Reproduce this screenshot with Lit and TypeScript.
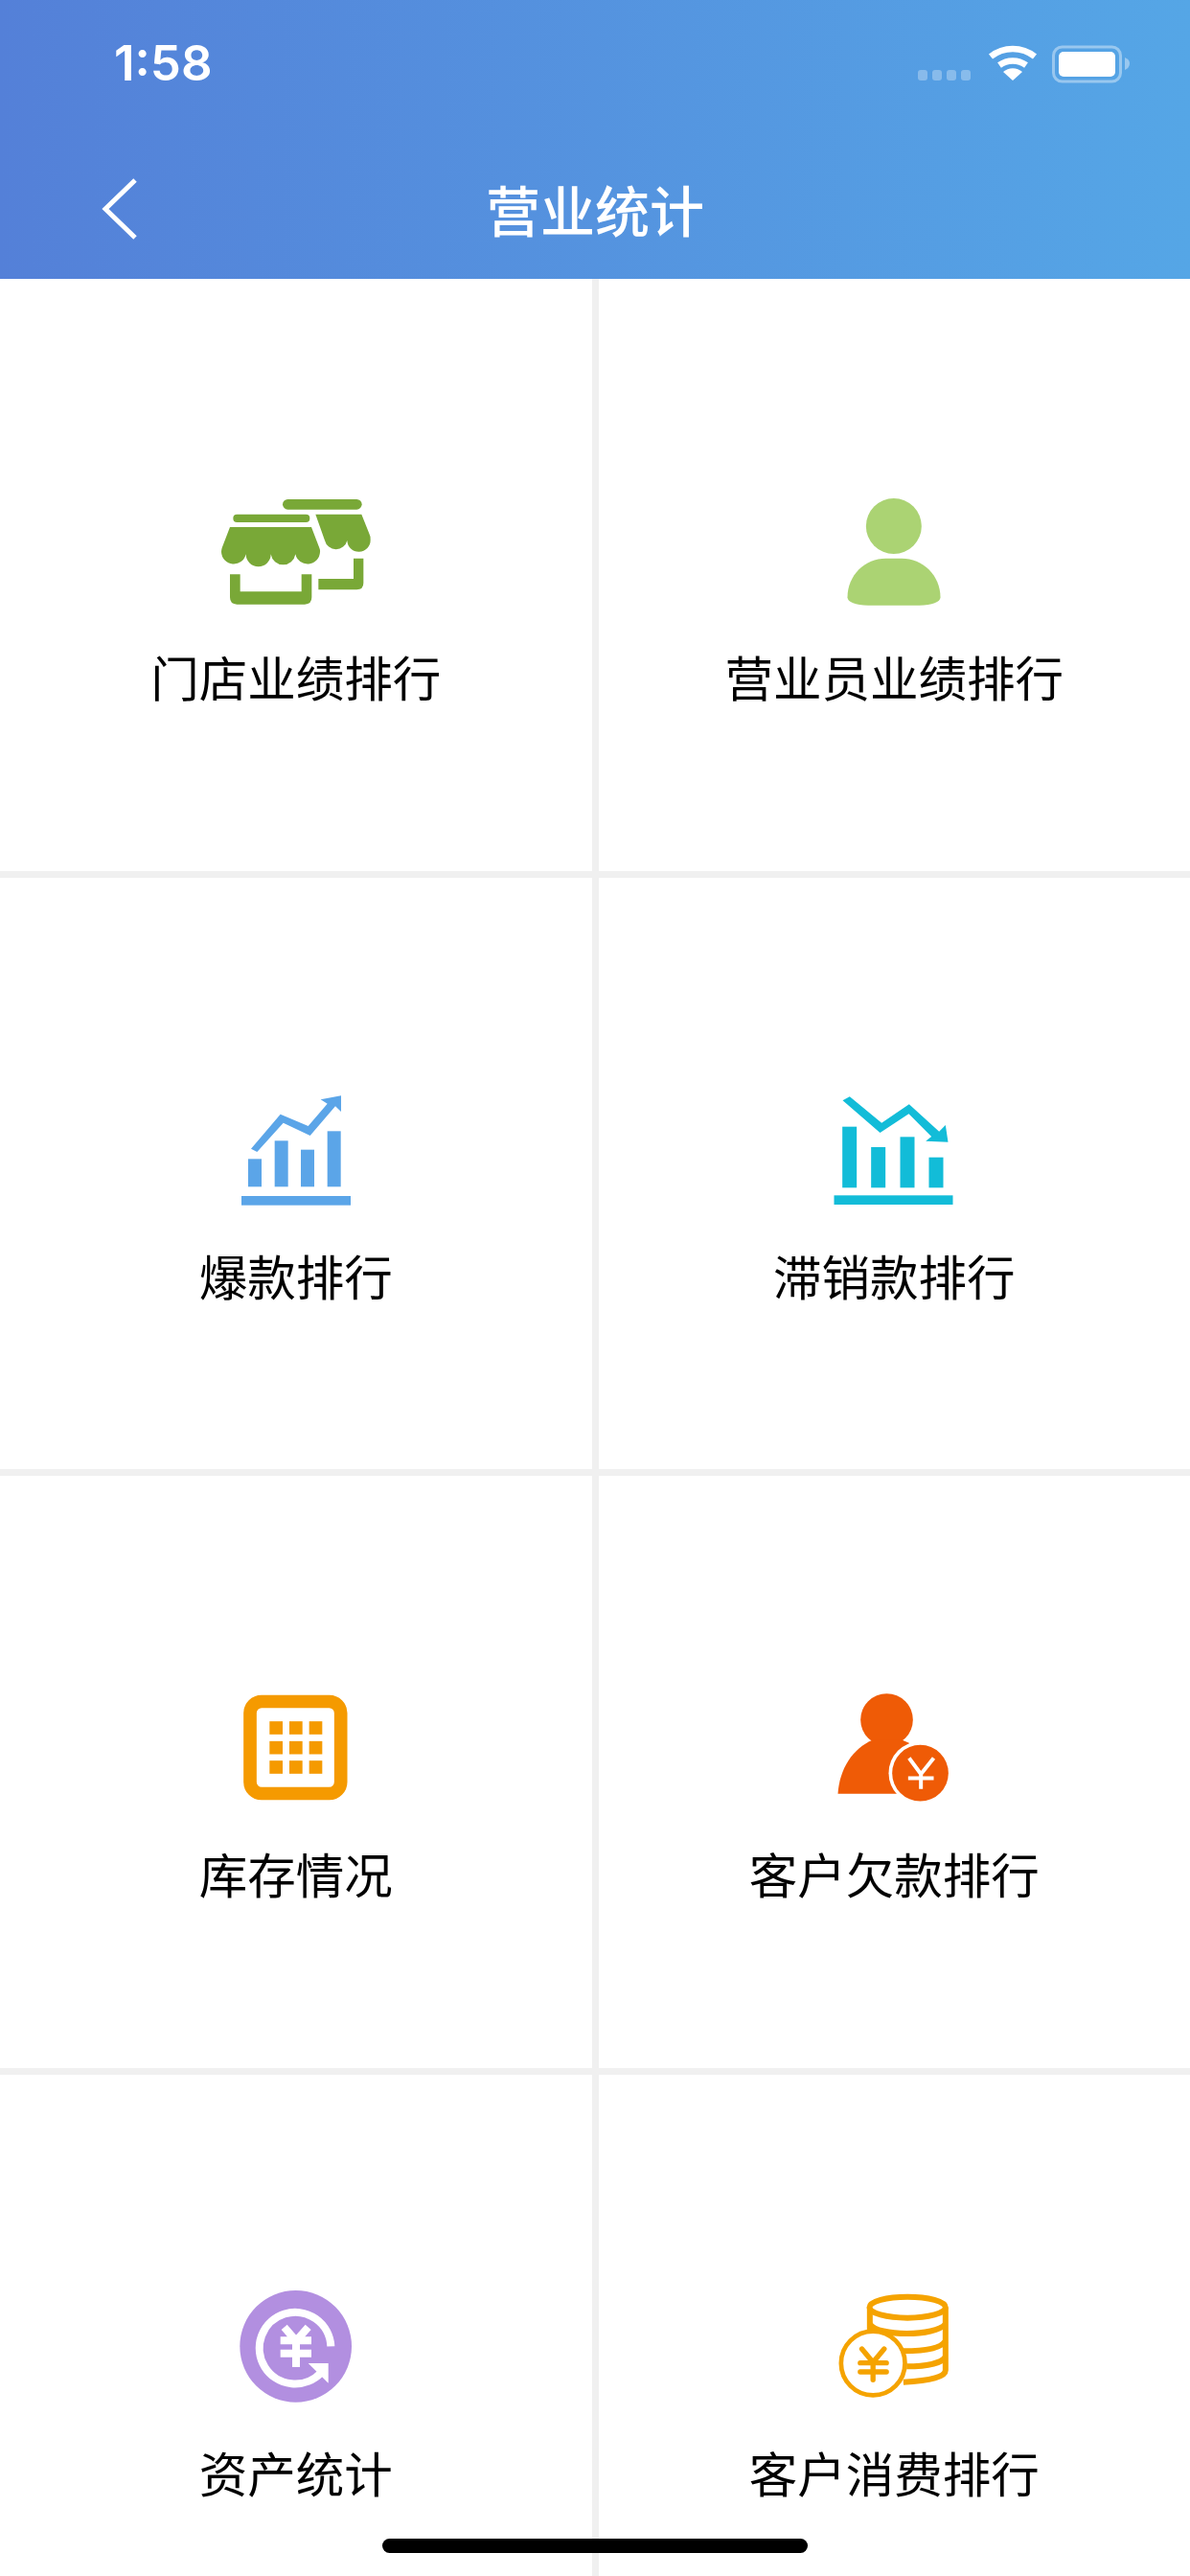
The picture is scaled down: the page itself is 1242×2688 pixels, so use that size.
import { LitElement, html, svg, css } from 'lit';
import { customElement } from 'lit/decorators.js';

// icon paths are in 3x units, the viewBox offsets line them up inside a 220x170 box
const yen = (x: number, y: number) => svg`
  <path d="M${x - 37} ${y - 50}L${x} ${y}L${x + 40} ${y - 50}M${x - 40} ${y + 13}H${x + 40}M${x} ${y}V${y + 47}" fill="none" stroke="#fff" stroke-width="12"/>`;

const icons = {
  store: svg`
    <g fill="#79a837">
      <rect x="130" y="140" width="240" height="25" rx="12"/>
      <path d="M120 180H375L400 245Q403 252 402 258A39 39 0 0 1 325 265A39 39 0 0 1 248 265A39 39 0 0 1 170 265A39 39 0 0 1 93 258Q93 252 95 245Z"/>
      <path d="M120 328H152V382H344V328H376V400Q376 422 354 422H142Q120 422 120 400Z"/>
      <rect x="285" y="93" width="248" height="32" rx="16"/>
      <path d="M388 140H532L556 200Q562 212 560 220A36 36 0 0 1 487 222A36 36 0 0 1 417 222Z"/>
      <path d="M507 278H538V355Q538 376 517 376H397V342H507Z"/>
    </g>`,
  person: svg`
    <g fill="#abd373">
      <circle cx="220" cy="147" r="87"/>
      <path d="M75 370C75 300 130 248 195 248H245C310 248 366 300 366 370C366 385 340 395 300 395H140C100 395 75 385 75 370Z"/>
    </g>`,
  up: svg`
    <g fill="#5ba5e8">
      <rect x="87" y="268" width="42" height="87"/>
      <rect x="170" y="211" width="42" height="144"/>
      <rect x="252" y="239" width="42" height="116"/>
      <rect x="335" y="181" width="42" height="174"/>
      <rect x="66" y="384" width="342" height="29"/>
      <polygon points="96,236 115,246 197,155 281,195 360,103 378,120 378,70 314,82 335,95 275,165 188,128"/>
    </g>`,
  down: svg`
    <g fill="#12bcd8">
      <rect x="89" y="167" width="45" height="191"/>
      <rect x="179" y="231" width="45" height="127"/>
      <rect x="270" y="199" width="45" height="159"/>
      <rect x="360" y="263" width="45" height="95"/>
      <rect x="63" y="382" width="372" height="29"/>
      <polygon points="90,85 112,73 212,155 298,97 392,182 412,162 420,215 350,212 368,198 297,127 207,186"/>
    </g>`,
  stock: svg`
    <rect x="63" y="78" width="284" height="288" rx="36" fill="none" stroke="#f59a00" stroke-width="41"/>
    <g fill="#f59a00">
      ${[140, 202, 263].map((y) =>
        [124, 186, 248].map((x) => svg`<rect x=${x} y=${y} width="41" height="41"/>`)
      )}
    </g>`,
  debt: svg`
    <g fill="#ef5b06">
      <circle cx="198" cy="135" r="82"/>
      <path d="M45 367C50 290 90 225 155 198H245L268 208V367Z"/>
      <circle cx="303" cy="302" r="99" fill="#fff"/>
      <circle cx="303" cy="302" r="88"/>
    </g>
    ${yen(305, 305)}`,
  asset: svg`
    <circle cx="206" cy="235" r="175" fill="#b28fe0"/>
    <path d="M316 235A112 112 0 1 0 285 318" fill="none" stroke="#fff" stroke-width="24"/>
    <polygon points="245,288 308,288 308,350" fill="#fff"/>
    <path d="M170 175L207 218L245 175M158 217H255M158 257H255M207 218V300" fill="none" stroke="#fff" stroke-width="24"/>`,
  coins: svg`
    <g fill="none" stroke="#f5a300" stroke-width="18">
      <ellipse cx="263" cy="113" rx="119" ry="33"/>
      <path d="M145 113V190M382 113V310Q382 340 250 347"/>
      <path d="M145 165C170 205 350 205 382 165"/>
      <path d="M250 250C320 250 370 240 382 218"/>
      <path d="M260 298C320 298 370 288 382 268"/>
      <circle cx="155" cy="288" r="100" fill="#fff" stroke-width="14"/>
      <path d="M120 243L155 285L190 243M115 287H197M115 315H197M155 285V340" stroke-width="16" stroke-linecap="round"/>
    </g>`,
};

const cells = [
  { label: '门店业绩排行', icon: icons.store, view: '-3 0' },
  { label: '营业员业绩排行', icon: icons.person, view: '-109.5 -30' },
  { label: '爆款排行', icon: icons.up, view: '-93 -15' },
  { label: '滞销款排行', icon: icons.down, view: '-79.5 -15' },
  { label: '库存情况', icon: icons.stock, view: '-123 -31.5' },
  { label: '客户欠款排行', icon: icons.debt, view: '-109.5 -31.5' },
  { label: '资产统计', icon: icons.asset, view: '-123 -18' },
  { label: '客户消费排行', icon: icons.coins, view: '-109.5 -18' },
];

@customElement('app-root')
export class AppRoot extends LitElement {
  static styles = css`
    :host {
      display: block;
      position: relative;
      width: 1242px;
      height: 2688px;
      overflow: hidden;
      background: #f0f0f0;
      font-family: 'Noto Sans CJK SC', 'Noto Sans', sans-serif;
    }

    .header {
      height: 291px;
      box-sizing: border-box;
      background: linear-gradient(90deg, #5480d8, #55a6e6);
      color: #fff;
    }

    .status {
      height: 132px;
      box-sizing: border-box;
      padding: 40px 63px 0 119px;
      display: flex;
      justify-content: space-between;
      align-items: flex-start;
    }

    .time {
      font-family: Inter, 'Liberation Sans', sans-serif;
      font-size: 51px;
      line-height: 52px;
      font-weight: 600;
    }

    .status svg {
      display: block;
      margin-top: 5px;
    }

    .nav {
      height: 159px;
      display: grid;
      grid-template-columns: 1fr auto 1fr;
      align-items: start;
    }

    .back {
      display: block;
      margin: 54px 0 0 105px;
    }

    .title {
      font-size: 57px;
      font-weight: 500;
      line-height: 80px;
      margin-top: 45px;
    }

    .grid {
      display: grid;
      grid-template-columns: 1fr 1fr;
      gap: 7px;
    }

    .cell {
      aspect-ratio: 1;
      background: #fff;
      display: flex;
      flex-direction: column;
      align-items: center;
      padding-top: 199px;
      box-sizing: border-box;
    }

    .cell svg {
      display: block;
      flex: none;
    }

    .label {
      font-size: 50.5px;
      line-height: 72px;
      margin-top: 9px;
      color: #000;
      white-space: nowrap;
    }

    .home {
      position: absolute;
      left: 399px;
      bottom: 24px;
      width: 444px;
      height: 15px;
      border-radius: 8px;
      background: #000;
    }
  `;

  render() {
    return html`
      <div class="header">
        <div class="status">
          <span class="time">1:58</span>
          <svg width="221" height="44" viewBox="958 45 221 44">
            <g fill="#fff" opacity="0.3">
              <rect x="958" y="73" width="10" height="11" rx="3"/>
              <rect x="973" y="73" width="10" height="11" rx="3"/>
              <rect x="988" y="73" width="10" height="11" rx="3"/>
              <rect x="1003" y="73" width="10" height="11" rx="3"/>
            </g>
            <path d="M1034 59A37 37 0 0 1 1080 59M1043 68A24 24 0 0 1 1071 68" fill="none" stroke="#fff" stroke-width="6.5"/>
            <path d="M1047 75A15 15 0 0 1 1067 75L1057 84Z" fill="#fff"/>
            <rect x="1099.5" y="49" width="70" height="36" rx="9" fill="none" stroke="#fff" stroke-opacity="0.4" stroke-width="3"/>
            <rect x="1105" y="54" width="59" height="26" rx="5" fill="#fff"/>
            <path d="M1174 60Q1179 62 1179 66Q1179 71 1174 73Z" fill="#fff" opacity="0.4"/>
          </svg>
        </div>
        <div class="nav">
          <svg class="back" width="40" height="64" viewBox="0 0 40 64">
            <path d="M36 2L5 32L36 62" fill="none" stroke="#fff" stroke-width="5"/>
          </svg>
          <div class="title">营业统计</div>
        </div>
      </div>
      <div class="grid">
        ${cells.map(
          (c) => html`
            <div class="cell">
              <svg width="220" height="170" viewBox="${c.view} 660 510">${c.icon}</svg>
              <div class="label">${c.label}</div>
            </div>
          `
        )}
      </div>
      <div class="home"></div>
    `;
  }
}
